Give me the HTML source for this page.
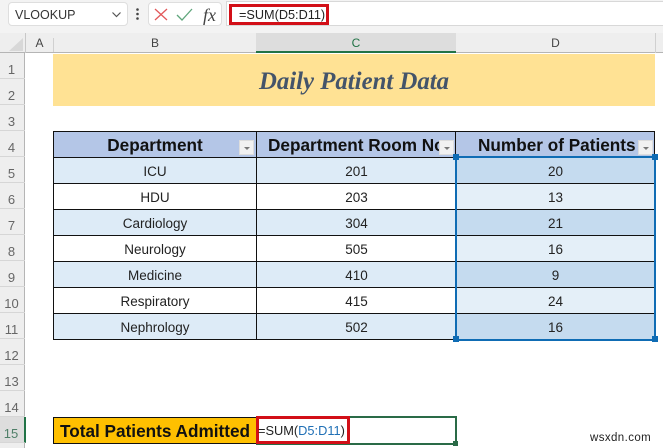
<!DOCTYPE html>
<html><head><meta charset="utf-8"><style>
html,body{margin:0;padding:0;background:#fff}
#p{position:relative;width:663px;height:448px;overflow:hidden;background:#fff;font-family:"Liberation Sans",sans-serif;color:#222}
#p div{position:absolute;box-sizing:border-box}
.t{white-space:nowrap;text-align:center}
.rh{left:0;width:25px;height:26px;border-bottom:1px solid #d6d6d6;color:#666;font-size:13px;line-height:33px;text-align:center;padding-right:2px}
.h{font-weight:bold;font-size:17.200px;color:#111;top:131px;height:26px;line-height:29px}
.c{font-size:13.5px;height:26px;line-height:29px;color:#222}
.f{width:15px;height:15px;background:#f1f1f1;border:1px solid #ddd;top:140px}
.f:after{content:"";position:absolute;left:4px;top:6px;border-left:3px solid transparent;border-right:3px solid transparent;border-top:3px solid #777}
.hb{width:6px;height:6px;background:#0f6cb4;border:0}
</style></head><body><div id="p">
<!-- toolbar -->
<div style="left:0;top:0;width:663px;height:33px;background:#f3f3f3"></div>
<div style="left:8px;top:2px;width:120px;height:24px;background:#fff;border:1px solid #dedede;border-radius:4px"></div>
<div class="t" style="left:15px;top:2px;height:24px;line-height:26px;font-size:12.5px;color:#333">VLOOKUP</div>
<svg style="position:absolute;left:0;top:0" width="240" height="33"><path d="M112.500 12.500L116.500 16.500L120.500 12.500" fill="none" stroke="#555" stroke-width="1.200"/><circle cx="137.500" cy="9.500" r="1.300" fill="#444"/><circle cx="137.500" cy="14" r="1.300" fill="#444"/><circle cx="137.500" cy="18.500" r="1.300" fill="#444"/></svg>
<div style="left:148px;top:2px;width:74px;height:24px;background:#fff;border:1px solid #dedede;border-radius:4px"></div>
<svg style="position:absolute;left:0;top:0" width="240" height="33"><path d="M155 9L167 20M167 9L155 20" fill="none" stroke="#e2585a" stroke-width="1.300"/><path d="M177 15L182 20L192 9" fill="none" stroke="#5fa67c" stroke-width="1.300"/></svg>
<div class="t" style="left:203px;top:2px;font:italic 18px/26px 'Liberation Serif',serif;color:#444">fx</div>
<div style="left:226px;top:1px;width:437px;height:25px;background:#fff;border:1px solid #d8d8d8;border-right:0"></div>
<div style="left:229px;top:4px;width:100px;height:21px;border:3px solid #d20f17;background:#fff"></div>
<div class="t" style="left:239px;top:3px;height:23px;line-height:25px;font-size:12.700px;color:#222">=SUM(D5:D11)</div>
<!-- column headers -->
<div style="left:0;top:33px;width:663px;height:20px;background:#eeeeee;border-bottom:1px solid #b5b5b5"></div>
<div style="left:0;top:53px;width:25px;height:395px;background:#eeeeee;border-right:1px solid #b5b5b5"></div>
<svg style="position:absolute;left:0;top:33px" width="26" height="20"><path d="M9 18L23 18L23 5Z" fill="#d8d8d8"/></svg>
<div style="left:25px;top:33px;width:1px;height:20px;background:#c8c8c8"></div>
<div style="left:53px;top:38px;height:14px;width:1px;background:#d0d0d0"></div>
<div style="left:256px;top:33px;width:200px;height:20px;background:#dddddd;border-bottom:2px solid #217346"></div>
<div style="left:655px;top:33px;height:20px;width:1px;background:#d0d0d0"></div>
<div class="t" style="left:26px;width:27px;top:33px;line-height:21px;font-size:12px;color:#444">A</div>
<div class="t" style="left:54px;width:202px;top:33px;line-height:21px;font-size:12px;color:#444">B</div>
<div class="t" style="left:256px;width:200px;top:33px;line-height:21px;font-size:12px;color:#217346">C</div>
<div class="t" style="left:456px;width:199px;top:33px;line-height:21px;font-size:12px;color:#444">D</div>
<!-- row headers -->
<div class="rh" style="top:53px">1</div><div class="rh" style="top:79px">2</div><div class="rh" style="top:105px">3</div><div class="rh" style="top:131px">4</div><div class="rh" style="top:157px">5</div><div class="rh" style="top:183px">6</div><div class="rh" style="top:209px">7</div><div class="rh" style="top:235px">8</div><div class="rh" style="top:261px">9</div><div class="rh" style="top:287px">10</div><div class="rh" style="top:313px">11</div><div class="rh" style="top:339px">12</div><div class="rh" style="top:365px">13</div><div class="rh" style="top:391px">14</div>
<div class="rh" style="top:417px;background:#dddddd;width:26px;border-right:2px solid #217346;color:#4f7f68">15</div>
<!-- title -->
<div style="left:53px;top:54px;width:602px;height:52px;background:#ffe294"></div>
<div class="t" style="left:53px;width:602px;top:54px;height:52px;font:italic bold 24.800px/55px 'Liberation Serif',serif;color:#44546a">Daily Patient Data</div>
<!-- table fills -->
<div style="left:53px;top:131px;width:602px;height:26px;background:#b4c6e7"></div>
<div style="left:53px;top:157px;width:403px;height:26px;background:#ddebf7"></div>
<div style="left:53px;top:209px;width:403px;height:26px;background:#ddebf7"></div>
<div style="left:53px;top:261px;width:403px;height:26px;background:#ddebf7"></div>
<div style="left:53px;top:313px;width:403px;height:26px;background:#ddebf7"></div>
<div style="left:456px;top:157px;width:199px;height:182px;background:#e4eff8"></div>
<div style="left:456px;top:157px;width:199px;height:26px;background:#c5dbef"></div>
<div style="left:456px;top:209px;width:199px;height:26px;background:#c5dbef"></div>
<div style="left:456px;top:261px;width:199px;height:26px;background:#c5dbef"></div>
<div style="left:456px;top:313px;width:199px;height:26px;background:#c5dbef"></div>
<!-- grid -->
<div style="left:53px;top:131px;width:602px;height:1px;background:#111"></div>
<div style="left:53px;top:157px;width:602px;height:1px;background:#111"></div>
<div style="left:53px;top:183px;width:602px;height:1px;background:#111"></div>
<div style="left:53px;top:209px;width:602px;height:1px;background:#111"></div>
<div style="left:53px;top:235px;width:602px;height:1px;background:#111"></div>
<div style="left:53px;top:261px;width:602px;height:1px;background:#111"></div>
<div style="left:53px;top:287px;width:602px;height:1px;background:#111"></div>
<div style="left:53px;top:313px;width:602px;height:1px;background:#111"></div>
<div style="left:53px;top:339px;width:403px;height:1px;background:#111"></div>
<div style="left:53px;top:131px;width:1px;height:209px;background:#111"></div>
<div style="left:256px;top:131px;width:1px;height:209px;background:#111"></div>
<div style="left:455px;top:131px;width:1px;height:26px;background:#111"></div>
<div style="left:654px;top:131px;width:1px;height:26px;background:#111"></div>
<!-- headers -->
<div class="t h" style="left:54px;width:202px">Department</div>
<div class="h" style="left:268px;width:172px;overflow:hidden;white-space:nowrap">Department Room No</div>
<div class="t h" style="left:478px">Number of Patients</div>
<div class="f" style="left:239px"></div><div class="f" style="left:439px"></div><div class="f" style="left:638px"></div>
<!-- body -->
<div class="t c" style="left:54px;width:202px;top:157px">ICU</div><div class="t c" style="left:257px;width:199px;top:157px">201</div><div class="t c" style="left:456px;width:199px;top:157px">20</div>
<div class="t c" style="left:54px;width:202px;top:183px">HDU</div><div class="t c" style="left:257px;width:199px;top:183px">203</div><div class="t c" style="left:456px;width:199px;top:183px">13</div>
<div class="t c" style="left:54px;width:202px;top:209px">Cardiology</div><div class="t c" style="left:257px;width:199px;top:209px">304</div><div class="t c" style="left:456px;width:199px;top:209px">21</div>
<div class="t c" style="left:54px;width:202px;top:235px">Neurology</div><div class="t c" style="left:257px;width:199px;top:235px">505</div><div class="t c" style="left:456px;width:199px;top:235px">16</div>
<div class="t c" style="left:54px;width:202px;top:261px">Medicine</div><div class="t c" style="left:257px;width:199px;top:261px">410</div><div class="t c" style="left:456px;width:199px;top:261px">9</div>
<div class="t c" style="left:54px;width:202px;top:287px">Respiratory</div><div class="t c" style="left:257px;width:199px;top:287px">415</div><div class="t c" style="left:456px;width:199px;top:287px">24</div>
<div class="t c" style="left:54px;width:202px;top:313px">Nephrology</div><div class="t c" style="left:257px;width:199px;top:313px">502</div><div class="t c" style="left:456px;width:199px;top:313px">16</div>
<!-- selection -->
<div style="left:455px;top:156px;width:201px;height:185px;border:2px solid #0f6cb4"></div>
<div class="hb" style="left:453px;top:154px"></div><div class="hb" style="left:652px;top:154px"></div><div class="hb" style="left:453px;top:336px"></div><div class="hb" style="left:652px;top:336px"></div>
<!-- total -->
<div style="left:53px;top:417px;width:204px;height:27px;background:#ffc000;border:1px solid #111"></div>
<div class="t" style="left:60px;top:417px;font-weight:bold;font-size:17.200px;line-height:29px;color:#111">Total Patients Admitted</div>
<div style="left:256px;top:416px;width:201px;height:29px;border:2px solid #2a6b47;background:#fff"></div>
<div class="hb" style="left:453px;top:441px;width:5px;height:5px;background:#2a6b47"></div>
<div style="left:256px;top:416px;width:94px;height:28px;border:3px solid #d20f17;background:#fff"></div>
<div class="t" style="left:258px;top:418px;line-height:26px;font-size:12.800px;color:#222">=SUM(<span style="color:#1f6fb5">D5:D11</span>)</div>
<div class="t" style="left:590px;top:431px;font-size:11.500px;letter-spacing:.4px;line-height:14px;color:#222">wsxdn.com</div>
</div></body></html>
